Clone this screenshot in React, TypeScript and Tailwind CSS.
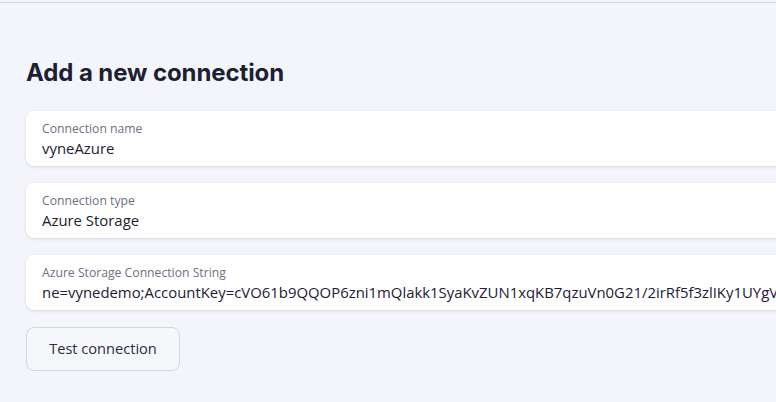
const fields = [
  { label: "Connection name", value: "vyneAzure" },
  { label: "Connection type", value: "Azure Storage" },
  {
    label: "Azure Storage Connection String",
    value:
      "ne=vynedemo;AccountKey=cVO61b9QQOP6zni1mQlakk1SyaKvZUN1xqKB7qzuVn0G21/2irRf5f3zlIKy1UYgVw==;EndpointSuffix=core.windows.net",
  },
];

export default function App() {
  return (
    <div className="h-[402px] w-[776px] overflow-hidden bg-[#f4f5fa] font-['Open_Sans',sans-serif]">
      <div className="h-[2px] bg-[#f4f5fa]" />
      <div className="h-px bg-[#d3d5de]" />
      <div className="pl-[26px] pt-[55px]">
        <h1 className="text-[24px] font-bold leading-[30px] tracking-[-0.1px] text-[#1c1f35] font-['Inter',sans-serif]">
          Add a new connection
        </h1>
        <div className="mt-[23px] flex w-[800px] flex-col gap-[17px]">
          {fields.map((f) => (
            <div
              key={f.label}
              className="h-[55px] overflow-hidden rounded-[8px] bg-white px-4 pt-[10px] shadow-[0_1px_3px_rgba(20,24,60,0.12)]"
            >
              <div className="text-[12.2px] leading-[16px] text-[#6e7083]">{f.label}</div>
              <div className="mt-px whitespace-nowrap text-[14.9px] leading-[20px] text-[#1d2033]">{f.value}</div>
            </div>
          ))}
        </div>
        <button className="mt-[17px] h-[44px] w-[154px] rounded-[8px] border border-[#d5d6de] bg-[#f6f7fb] text-[14.6px] font-medium text-[#2b2d42]">
          Test connection
        </button>
      </div>
    </div>
  );
}
